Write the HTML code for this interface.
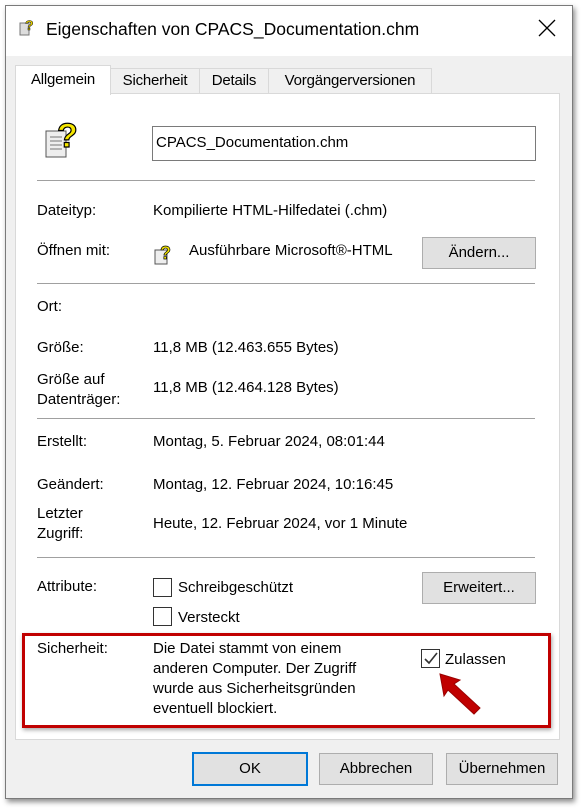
<!DOCTYPE html>
<html><head><meta charset="utf-8"><style>
body{margin:0;width:585px;height:812px;background:#fff;font-family:"Liberation Sans",sans-serif;font-size:15px;color:#000;position:relative;overflow:hidden}
.a{position:absolute;white-space:nowrap;line-height:20px}
.win{position:absolute;left:5px;top:5px;width:566px;height:792px;border:1px solid #7a7a7a;background:#f0f0f0;box-shadow:2px 3px 5px rgba(0,0,0,.45)}
.title{position:absolute;left:0;top:0;width:566px;height:50px;background:#fff}
.panel{position:absolute;left:15px;top:93px;width:543px;height:645px;background:#fff;border:1px solid #d9d9d9}
.sep{position:absolute;left:37px;width:498px;height:1px;background:#a0a0a0;border-bottom:1px solid #fff}
.btn{position:absolute;background:#e1e1e1;border:1px solid #adadad;text-align:center;line-height:30px;height:30px}
.cb{position:absolute;width:17px;height:17px;border:1px solid #333;background:#fff}
.tab{position:absolute;top:68px;height:24px;background:#f0f0f0;border:1px solid #d9d9d9;border-bottom:none;line-height:24px;text-align:center;letter-spacing:-0.2px}
</style></head><body>
<div class="win">
<div class="title"></div>
</div>
<svg class="a" style="left:19px;top:17px" width="16" height="20"><rect x="1" y="6" width="9" height="12" fill="#ddd" stroke="#777"/><text x="6" y="13" font-size="14" font-weight="bold" fill="#e8d200" stroke="#000" stroke-width=".5" font-family="Liberation Sans">?</text></svg>
<div class="a" style="left:46px;top:19px;font-size:17.5px">Eigenschaften von CPACS_Documentation.chm</div>
<svg class="a" style="left:538px;top:19px" width="18" height="18"><path d="M1 1 L17 17 M17 1 L1 17" stroke="#000" stroke-width="1.3"/></svg>
<div class="panel"></div>
<div class="tab" style="left:110px;width:88px">Sicherheit</div>
<div class="tab" style="left:199px;width:68px">Details</div>
<div class="tab" style="left:268px;width:162px">Vorgängerversionen</div>
<div class="a" style="left:15px;top:65px;width:94px;height:29px;background:#fff;border:1px solid #d9d9d9;border-bottom:none;text-align:center;line-height:27px;letter-spacing:-0.2px">Allgemein</div>
<svg class="a" style="left:44px;top:115px" width="36" height="46"><rect x="2" y="16" width="20" height="26" fill="#eee" stroke="#555"/><g stroke="#777"><line x1="6" y1="22" x2="18" y2="22"/><line x1="6" y1="26" x2="18" y2="26"/><line x1="6" y1="30" x2="18" y2="30"/><line x1="6" y1="34" x2="18" y2="34"/></g><text x="13" y="32" font-size="34" font-weight="bold" fill="#f5e600" stroke="#000" stroke-width="1.2" font-family="Liberation Sans">?</text></svg>
<div class="a" style="left:152px;top:126px;width:384px;height:35px;border:1px solid #7a7a7a;background:#fff;line-height:31px;padding-left:3px;box-sizing:border-box">CPACS_Documentation.chm</div>
<div class="sep" style="top:180px"></div>
<div class="a" style="left:37px;top:201px">Dateityp:</div>
<div class="a" style="left:153px;top:201px">Kompilierte HTML-Hilfedatei (.chm)</div>
<div class="a" style="left:37px;top:241px">Öffnen mit:</div>
<svg class="a" style="left:153px;top:242px" width="24" height="24"><rect x="2" y="8" width="12" height="14" fill="#eee" stroke="#555"/><text x="7" y="17" font-size="18" font-weight="bold" fill="#f5e600" stroke="#000" stroke-width=".7" font-family="Liberation Sans">?</text></svg>
<div class="a" style="left:189px;top:241px">Ausführbare Microsoft®-HTML</div>
<div class="btn" style="left:422px;top:237px;width:112px">Ändern...</div>
<div class="sep" style="top:283px"></div>
<div class="a" style="left:37px;top:297px">Ort:</div>
<div class="a" style="left:37px;top:338px">Größe:</div>
<div class="a" style="left:153px;top:338px">11,8 MB (12.463.655 Bytes)</div>
<div class="a" style="left:37px;top:370px">Größe auf<br>Datenträger:</div>
<div class="a" style="left:153px;top:378px">11,8 MB (12.464.128 Bytes)</div>
<div class="sep" style="top:418px"></div>
<div class="a" style="left:37px;top:432px">Erstellt:</div>
<div class="a" style="left:153px;top:432px">Montag, 5. Februar 2024, 08:01:44</div>
<div class="a" style="left:37px;top:475px">Geändert:</div>
<div class="a" style="left:153px;top:475px">Montag, 12. Februar 2024, 10:16:45</div>
<div class="a" style="left:37px;top:504px">Letzter<br>Zugriff:</div>
<div class="a" style="left:153px;top:514px">Heute, 12. Februar 2024, vor 1 Minute</div>
<div class="sep" style="top:557px"></div>
<div class="a" style="left:37px;top:577px">Attribute:</div>
<div class="cb" style="left:153px;top:578px"></div>
<div class="a" style="left:178px;top:578px">Schreibgeschützt</div>
<div class="btn" style="left:422px;top:572px;width:112px">Erweitert...</div>
<div class="cb" style="left:153px;top:607px"></div>
<div class="a" style="left:178px;top:608px">Versteckt</div>
<div class="a" style="left:22px;top:633px;width:523px;height:89px;border:3px solid #c00000;box-shadow:1px 2px 4px rgba(0,0,0,.35)"></div>
<div class="a" style="left:37px;top:639px">Sicherheit:</div>
<div class="a" style="left:153px;top:639px;line-height:20px">Die Datei stammt von einem<br>anderen Computer. Der Zugriff<br>wurde aus Sicherheitsgründen<br>eventuell blockiert.</div>
<div class="cb" style="left:421px;top:649px"></div>
<svg class="a" style="left:421px;top:649px" width="19" height="19"><path d="M4 10 L8 14 L16 4" fill="none" stroke="#333" stroke-width="1.6"/></svg>
<div class="a" style="left:445px;top:650px">Zulassen</div>
<svg class="a" style="left:436px;top:670px" width="50" height="46"><path d="M4 4 L24 10 L18 14 L44 38 L38 44 L12 20 L8 26 Z" fill="#c00000" stroke="#900" stroke-width="1"/></svg>
<div class="btn" style="left:192px;top:752px;width:112px;border:2px solid #0078d7;height:30px;line-height:30px">OK</div>
<div class="btn" style="left:319px;top:753px;width:112px">Abbrechen</div>
<div class="btn" style="left:446px;top:753px;width:110px">Übernehmen</div>
</body></html>
